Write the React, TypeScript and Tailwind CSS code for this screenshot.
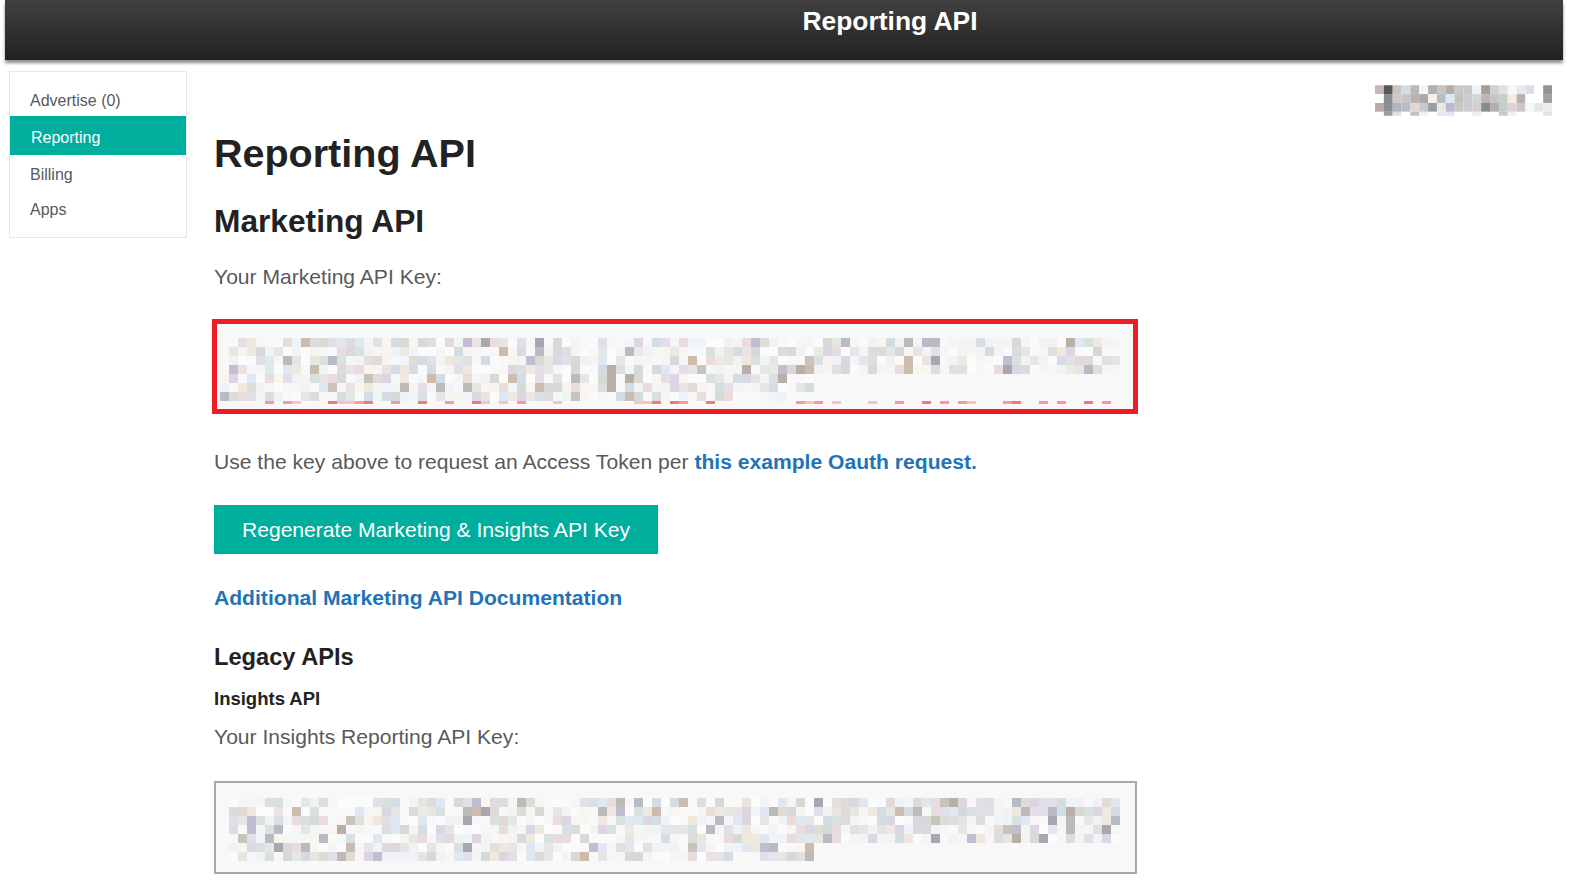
const smallMosaic = [
  ['#c4b8b4', '#58585a', '#c8c6c2', '#d0dce8', '#b8b8b8', '#f0f6fc', '#b0b0b0', '#c4c4c2', '#b8aca6', '#c8c8ca', '#c8c8cc', '#f0f2f6', '#a89c94', '#d0d0d2', '#e0e0de', '#f4f8fc', '#e8e8e8', '#d8dfec', '#ffffff', '#959595'],
  ['#ffffff', '#8a8c8e', '#ccc8cc', '#c8c6c4', '#bcb0b0', '#b0a8a6', '#f4f0ea', '#b4bcc4', '#dce8f4', '#c4c2bc', '#c8ccd0', '#d4d4da', '#c0b4b2', '#c8c4c4', '#c8ccce', '#f4ece4', '#bcb0aa', '#ffffff', '#ffffff', '#a0a0a0'],
  ['#b8aca4', '#8a8e90', '#b0b4bc', '#b8bcc8', '#e0d8d2', '#c8c8d0', '#9a9ea4', '#ece8e2', '#b4bccc', '#c8c8c8', '#ccccd2', '#d0ced0', '#888a90', '#b0b0b4', '#c4cccc', '#dcd4d4', '#ccc8ca', '#f4f8fa', '#e6e6e6', '#eeeeee'],
  ['#ffffff', '#9a9c9e', '#dfe0e4', '#ffffff', '#c8c0bc', '#eef2f8', '#ffffff', '#e4e6ea', '#dde6f2', '#ffffff', '#ffffff', '#eeeeee', '#ffffff', '#ffffff', '#c4c8d0', '#eef2f6', '#ffffff', '#ffffff', '#ffffff', '#e2e2e2'],
];

const tints = ['#dedbd8', '#d9e0e0', '#e3dfe8', '#efe8de', '#dfe8f0', '#e8e4e4', '#d6d9d6', '#dcd6e2', '#e6e6e2', '#d4dce4', '#e8dcdc'];
const darks = ['#bdbbb8', '#b8bac4', '#b8b0a6', '#c4bcd0', '#a8a6ae', '#c8c4ba', '#cdbcae'];
const lights = ['#fbfbfb', '#f6f6f6', '#f3f4f6', '#f8f5f0', '#f0f3f5', '#fafafa', '#f8f8f8'];

// blurred key text, seeded so it stays the same between renders
function makeCells(seed: number, rows: [number, number][]) {
  let s = seed;
  const next = () => {
    s = (s * 1664525 + 1013904223) % 4294967296;
    return s / 4294967296;
  };
  const cells: { x: number; y: number; fill: string }[] = [];
  rows.forEach(([from, to], y) => {
    for (let x = from; x < to; x++) {
      const r = next();
      const list = r < 0.5 ? lights : r < 0.93 ? tints : darks;
      cells.push({ x, y, fill: list[Math.floor(next() * list.length)] });
    }
  });
  return cells;
}

function KeyMosaic({ seed, rows, dashes }: { seed: number; rows: [number, number][]; dashes?: [number, string][] }) {
  const cells = makeCells(seed, rows);
  return (
    <svg width="900" height="68" viewBox="0 0 900 68" className="block">
      {cells.map((c) => (
        <rect key={`${c.x}-${c.y}`} x={c.x * 9} y={c.y * 9} width="9" height="9" fill={c.fill} />
      ))}
      {dashes?.map(([col, fill]) => (
        <rect key={col} x={col * 9} y="63" width="9" height="3" fill={fill} />
      ))}
    </svg>
  );
}

function SmallMosaic() {
  return (
    <svg width="177" height="31" viewBox="0 0 180 31" className="block">
      {smallMosaic.map((row, y) =>
        row.map((fill, x) => <rect key={`${x}-${y}`} x={x * 9} y={y * 9} width="9" height={y === 3 ? 4 : 9} fill={fill} />),
      )}
    </svg>
  );
}

const strong = '#f0787f';
const mid = '#f59aa0';
const soft = '#f6c4c8';
const dashes: [number, string][] = [
  [5, mid], [7, mid], [8, soft], [12, strong], [13, soft], [14, soft], [15, mid], [16, strong],
  [19, mid], [22, strong], [25, mid], [28, strong], [29, soft], [31, soft], [33, mid], [37, soft],
  [46, soft], [47, soft], [48, strong], [50, strong], [51, mid], [54, strong], [64, mid], [65, soft],
  [66, mid], [68, soft], [72, soft], [75, mid], [78, strong], [80, mid], [82, mid], [83, soft],
  [87, mid], [88, strong], [91, mid], [93, mid], [96, strong], [98, mid],
];

export default function App() {
  return (
    <div className="h-[887px] w-[1593px] overflow-hidden bg-white font-['Liberation_Sans',Arial,sans-serif] text-[#595959]">
      {/* Top bar */}
      <div className="ml-[5px] flex h-[60px] w-[1558px] justify-center bg-gradient-to-b from-[#414141] to-[#232120] pl-[212px] pt-[4px] shadow-[0_3px_3px_rgba(0,0,0,0.45)]">
        <span className="text-[26.4px] leading-[34px] font-bold text-white">Reporting API</span>
      </div>

      <div className="flex">
        {/* Side nav */}
        <div className="mt-[11px] ml-[9px] h-[167px] w-[178px] shrink-0 border border-[#e8e8e8] pt-[9px] text-[16px]">
          <div className="flex h-[35px] items-center pt-[5px] pl-[20px]">Advertise (0)</div>
          <div className="flex h-[39px] items-center bg-[#00ae9e] pt-[5px] pl-[21px] text-white">Reporting</div>
          <div className="flex h-[36px] items-center pt-[4px] pl-[20px]">Billing</div>
          <div className="flex h-[34px] items-center pt-[4px] pl-[20px]">Apps</div>
        </div>

        {/* Main column */}
        <div className="ml-[27px] w-[924px] shrink-0">
          <h1 className="mt-[63px] text-[39.5px] leading-[60px] font-bold text-[#222222]">Reporting API</h1>
          <h2 className="mt-[16px] text-[31.7px] leading-[44px] font-bold text-[#222222]">Marketing API</h2>
          <p className="mt-[19px] text-[21.1px] leading-[30px]">Your Marketing API Key:</p>

          <div className="mt-[27px] -ml-[2px] h-[95px] w-[926px] border-[5px] border-[#ee1c25] bg-[#f8f8f8] pt-[14px] pl-[3px]">
            <KeyMosaic
              seed={41}
              rows={[[1, 100], [1, 100], [1, 100], [1, 100], [0, 66], [0, 66], [0, 63]]}
              dashes={dashes}
            />
          </div>

          <p className="mt-[33px] text-[21.1px] leading-[30px]">
            Use the key above to request an Access Token per{' '}
            <a className="font-bold text-[#1f73b7]">this example Oauth request.</a>
          </p>

          <button className="mt-[28px] flex h-[49px] w-[444px] items-center justify-center bg-[#00ae9e] text-[21.1px] text-white">
            Regenerate Marketing &amp; Insights API Key
          </button>

          <a className="mt-[29px] block text-[21.1px] leading-[30px] font-bold text-[#1f73b7]">
            Additional Marketing API Documentation
          </a>

          <h3 className="mt-[28px] text-[23.65px] leading-[32px] font-bold text-[#222222]">Legacy APIs</h3>
          <h4 className="mt-[14px] text-[18.5px] leading-[24px] font-bold text-[#222222]">Insights API</h4>
          <p className="mt-[11px] text-[21.1px] leading-[30px]">Your Insights Reporting API Key:</p>

          <div className="mt-[29px] h-[93px] w-[923px] border-2 border-[#a8a8a8] bg-[#f8f8f8] pt-[15px] pl-[13px]">
            <KeyMosaic seed={97} rows={[[0, 99], [0, 99], [0, 99], [0, 99], [0, 99], [0, 66], [0, 66]]} />
          </div>
        </div>

        {/* Account name, blurred */}
        <div className="mt-[25px] ml-[237px]">
          <SmallMosaic />
        </div>
      </div>
    </div>
  );
}
